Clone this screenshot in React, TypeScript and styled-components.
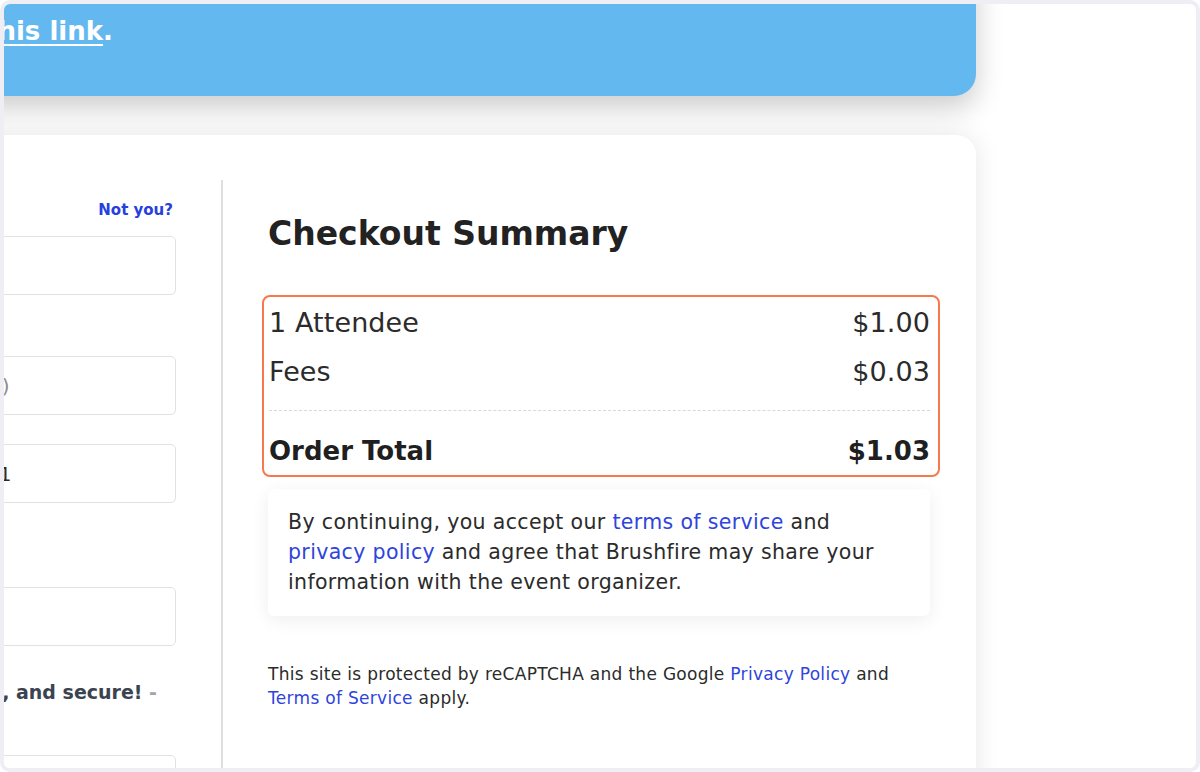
import React from "react";
import styled, { createGlobalStyle } from "styled-components";

const GlobalStyle = createGlobalStyle`
  html, body {
    margin: 0;
    padding: 0;
    background: #ffffff;
  }
  body {
    font-family: "DejaVu Sans", "Liberation Sans", sans-serif;
  }
  * {
    box-sizing: border-box;
  }
`;

type Line = {
  label: string;
  amount: string;
};

const lines: Line[] = [
  { label: "1 Attendee", amount: "$1.00" },
  { label: "Fees", amount: "$0.03" },
];

const App = () => {
  return (
    <Frame>
      <GlobalStyle />
      <Page>
        <Banner>
          <BannerText>
            <a href="#">this link</a>.
          </BannerText>
        </Banner>

        <Card>
          <FormColumn>
            <NotYouRow>
              <span>Email</span>
              <a href="#">Not you?</a>
            </NotYouRow>
            <Field $gap={16} readOnly defaultValue="" />
            <Field $gap={61} readOnly placeholder="Work (optional)" />
            <Field $gap={29} readOnly defaultValue="(555) 555 5551" />
            <Field $gap={84} readOnly defaultValue="" />
            <SecureNote>
              <span>
                Checkout is fast, simple, and secure! <em>-</em>
              </span>
            </SecureNote>
            <Field $gap={49} readOnly defaultValue="" />
          </FormColumn>

          <SummaryColumn>
            <Heading>Checkout Summary</Heading>

            <SummaryBox>
              {lines.map((line) => (
                <Row key={line.label}>
                  <span>{line.label}</span>
                  <span>{line.amount}</span>
                </Row>
              ))}
              <Divider />
              <Row $total>
                <span>Order Total</span>
                <span>$1.03</span>
              </Row>
            </SummaryBox>

            <Disclaimer>
              By continuing, you accept our <a href="#">terms of service</a> and
              <br />
              <a href="#">privacy policy</a> and agree that Brushfire may share your
              <br />
              information with the event organizer.
            </Disclaimer>

            <Recaptcha>
              This site is protected by reCAPTCHA and the Google{" "}
              <a href="#">Privacy Policy</a> and
              <br />
              <a href="#">Terms of Service</a> apply.
            </Recaptcha>
          </SummaryColumn>
        </Card>
      </Page>
    </Frame>
  );
};

export default App;

const Frame = styled.div`
  width: 1200px;
  height: 772px;
  border: 4px solid #efeef4;
  border-radius: 10px;
  overflow: hidden;
  background: #ffffff;
`;

const Page = styled.div`
  display: flex;
  flex-direction: column;
  gap: 39px;
  width: 1172px;
  margin: -44px 0 0 -200px;
`;

const Banner = styled.div`
  position: relative;
  z-index: 1;
  background: #63b9ef;
  border-radius: 0 0 22px 0;
  padding: 56px 0 50px 181px;
  box-shadow: 0 12px 28px rgba(0, 0, 0, 0.2);
`;

const BannerText = styled.p`
  margin: 0;
  font-size: 26px;
  line-height: 30px;
  font-weight: 700;
  color: #ffffff;

  a {
    color: #ffffff;
    text-decoration: underline;
    text-decoration-thickness: 2px;
    text-underline-offset: 4px;
  }
`;

const Card = styled.div`
  display: flex;
  min-height: 700px;
  padding-top: 45px;
  background: #ffffff;
  border-radius: 0 20px 0 0;
  box-shadow: 0 0 26px rgba(0, 0, 0, 0.1);
`;

const FormColumn = styled.div`
  display: flex;
  flex-direction: column;
  width: 417px;
  padding: 0 45px;
`;

const NotYouRow = styled.div`
  display: flex;
  justify-content: space-between;
  margin-top: 20px;
  font-size: 15px;
  line-height: 20px;
  font-weight: 700;
  color: #3b4351;

  a {
    padding-right: 3px;
    color: #2640e0;
    text-decoration: none;
  }
`;

const Field = styled.input<{ $gap: number }>`
  height: 59px;
  margin-top: ${(p) => p.$gap}px;
  padding: 0 14px 0 6px;
  border: 1px solid #e2e2e2;
  border-radius: 5px;
  background: #ffffff;
  font-family: "DejaVu Sans", sans-serif;
  font-size: 20px;
  color: #2b2b2b;
  outline: none;

  &::placeholder {
    color: #8a8a8a;
  }
`;

const SecureNote = styled.p`
  display: flex;
  justify-content: flex-end;
  margin: 32px 0 0;
  padding-right: 19px;
  font-size: 19px;
  line-height: 28px;
  font-weight: 700;
  color: #3b4351;

  span {
    white-space: nowrap;
  }

  em {
    font-style: normal;
    color: #a0a5ad;
  }
`;

const SummaryColumn = styled.div`
  display: flex;
  flex-direction: column;
  width: 755px;
  padding: 0 46px 0 45px;
  border-left: 2px solid #dcdee2;
  color: #2b2b2b;

  a {
    color: #2e44dc;
    text-decoration: none;
  }
`;

const Heading = styled.h2`
  margin: 34px 0 0;
  font-size: 33px;
  line-height: 40px;
  font-weight: 700;
  color: #222222;
`;

const SummaryBox = styled.div`
  margin: 41px -10px 0 -6px;
  padding: 1px 8px 0 5px;
  border: 2px solid #f7784a;
  border-radius: 8px;
`;

const Row = styled.div<{ $total?: boolean }>`
  display: flex;
  justify-content: space-between;
  align-items: center;
  height: 49px;
  font-size: ${(p) => (p.$total ? 26 : 27)}px;
  letter-spacing: ${(p) => (p.$total ? 0 : 0.1)}px;
  font-weight: ${(p) => (p.$total ? 700 : 400)};
  color: ${(p) => (p.$total ? "#1f1f1f" : "#2b2b2b")};
`;

const Divider = styled.hr`
  margin: 14px 0 15px;
  border: none;
  border-top: 1px dashed #d8d8d8;
`;

const Disclaimer = styled.p`
  margin: 12px 0 0;
  padding: 18px 20px 19px;
  background: #ffffff;
  border-radius: 6px;
  box-shadow: 0 4px 18px rgba(0, 0, 0, 0.07);
  font-size: 20.5px;
  line-height: 30px;
  letter-spacing: 0.35px;
`;

const Recaptcha = styled.p`
  margin: 46px 0 0;
  font-size: 17px;
  line-height: 24px;
  letter-spacing: 0.3px;
`;
